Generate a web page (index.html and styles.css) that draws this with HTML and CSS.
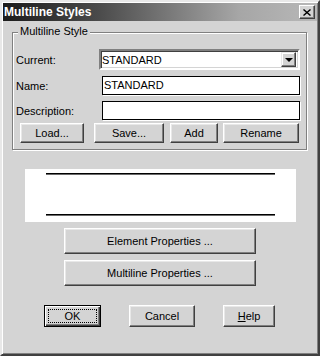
FILE: index.html
```html
<!DOCTYPE html>
<html lang="en">
<head>
    <meta charset="UTF-8">
    <title>Multiline Styles</title>
    <link rel="stylesheet" href="styles.css">
</head>
<body>

<div class="window">
    <div class="titlebar">
        <span class="title">Multiline Styles</span>
        <button class="close-btn">
            <svg width="8" height="7" viewBox="0 0 8 7">
                <path d="M0.5 0.5 L7.5 6.5 M7.5 0.5 L0.5 6.5" stroke="#000" stroke-width="1.4"/>
            </svg>
        </button>
    </div>

    <div class="content">
        <div class="group">
            <span class="legend">Multiline Style</span>

            <div class="row">
                <label class="lbl">Current:</label>
                <div class="combo">
                    <span class="combo-text">STANDARD</span>
                    <span class="combo-arrow"><span class="tri"></span></span>
                </div>
            </div>
            <div class="row">
                <label class="lbl">Name:</label>
                <div class="field">STANDARD</div>
            </div>
            <div class="row">
                <label class="lbl">Description:</label>
                <div class="field"></div>
            </div>

            <div class="btn-row">
                <button class="btn btn-load">Load...</button>
                <button class="btn btn-save">Save...</button>
                <button class="btn btn-add">Add</button>
                <button class="btn btn-rename">Rename</button>
            </div>
        </div>

        <div class="preview">
            <div class="mline"></div>
            <div class="mline"></div>
        </div>

        <button class="btn btn-wide btn-element">Element Properties ...</button>
        <button class="btn btn-wide btn-multi">Multiline Properties ...</button>

        <div class="footer">
            <button class="btn btn-ok"><span class="focus">OK</span></button>
            <button class="btn btn-cancel">Cancel</button>
            <button class="btn btn-help"><u>H</u>elp</button>
        </div>
    </div>
</div>

</body>
</html>
```

FILE: styles.css
```css
* {
    box-sizing: border-box;
}
body {
    margin: 0;
    font-family: "Liberation Sans", Arial, sans-serif;
    font-size: 11px;
    color: #000;
    background: #d4d4d4;
}
.window {
    width: 320px;
    height: 356px;
    background: #d4d4d4;
    border: 2px solid;
    border-color: #e8e8e8 #404040 #404040 #e8e8e8;
    box-shadow: inset 1px 1px #fff, inset -1px -1px #808080;
    padding: 1px;
}
.titlebar {
    height: 18px;
    display: flex;
    align-items: center;
    justify-content: space-between;
    padding: 0 2px 0 1px;
    background: linear-gradient(to right, #1c1c1c, #4a4a4a 30%, #a6a6a6 75%, #b8b8b8);
}
.title {
    color: #fff;
    font-weight: bold;
    font-size: 12px;
}
.close-btn {
    width: 16px;
    height: 14px;
    padding: 0;
    display: flex;
    align-items: center;
    justify-content: center;
    background: #d4d4d4;
    border: 1px solid;
    border-color: #fff #404040 #404040 #fff;
    box-shadow: inset -1px -1px #808080;
}
.content {
    padding-left: 9px;
}
.group {
    position: relative;
    margin-top: 11px;
    width: 295px;
    border: 1px solid #808080;
    box-shadow: inset 1px 1px #fff, 1px 1px #fff;
    padding: 16px 0 6px 3px;
}
.legend {
    position: absolute;
    top: -8px;
    left: 5px;
    padding: 0 2px;
    background: #d4d4d4;
}
.row {
    display: flex;
    align-items: center;
    margin-bottom: 6px;
}
.row:nth-of-type(3) {
    margin-bottom: 3px;
}
.lbl {
    width: 86px;
}
.combo {
    width: 201px;
    height: 21px;
    margin-left: -3px;
    display: flex;
    align-items: center;
    justify-content: space-between;
    background: #fff;
    border: 2px solid;
    border-color: #808080 #fff #fff #808080;
    box-shadow: inset 1px 1px #404040, inset -1px -1px #d4d4d4;
    padding: 0 2px 0 0;
}
.combo-text {
    padding-left: 1px;
}
.combo-arrow {
    width: 15px;
    height: 15px;
    display: flex;
    align-items: center;
    justify-content: center;
    background: #d4d4d4;
    border: 1px solid;
    border-color: #e8e8e8 #404040 #404040 #e8e8e8;
    box-shadow: inset -1px -1px #808080, inset 1px 1px #fff;
}
.tri {
    width: 0;
    height: 0;
    border-left: 4px solid transparent;
    border-right: 4px solid transparent;
    border-top: 4px solid #000;
    margin-top: 1px;
}
.field {
    width: 198px;
    height: 19px;
    background: #fff;
    border: 1px solid #000;
    box-shadow: 1px 1px #fff;
    padding: 2px 1px 0;
    line-height: 13px;
}
.btn {
    font-family: "Liberation Sans", Arial, sans-serif;
    font-size: 11px;
    color: #000;
    background: #d4d4d4;
    border: 1px solid;
    border-color: #fff #404040 #404040 #fff;
    box-shadow: inset -1px -1px #808080, inset 1px 1px #e8e8e8;
    padding: 0;
    display: block;
}
.btn-row {
    display: flex;
    margin-left: 4px;
}
.btn-row .btn {
    height: 20px;
}
.btn-load {
    width: 64px;
}
.btn-save {
    width: 70px;
    margin-left: 10px;
}
.btn-add {
    width: 48px;
    margin-left: 6px;
}
.btn-rename {
    width: 76px;
    margin-left: 5px;
}
.preview {
    margin: 19px 0 0 13px;
    width: 271px;
    height: 53px;
    background: #fff;
    padding: 4px 0 0 21px;
}
.mline {
    width: 229px;
    height: 2px;
    border-top: 1px solid #000;
    background: #6a6a6a;
    margin-bottom: 39px;
}
.btn-wide {
    width: 192px;
    height: 26px;
    margin-left: 52px;
}
.btn-element {
    margin-top: 6px;
}
.btn-multi {
    margin-top: 6px;
}
.footer {
    display: flex;
    gap: 28px;
    margin: 19px 0 0 32px;
}
.footer .btn {
    height: 22px;
}
.btn-ok {
    width: 57px;
    border: 1px solid #000;
    box-shadow: inset 1px 1px #fff, inset -1px -1px #404040, inset -2px -2px #808080;
    padding: 3px;
}
.focus {
    display: block;
    height: 100%;
    border: 1px dotted #000;
    line-height: 12px;
}
.btn-cancel {
    width: 66px;
}
.btn-help {
    width: 52px;
}
```
